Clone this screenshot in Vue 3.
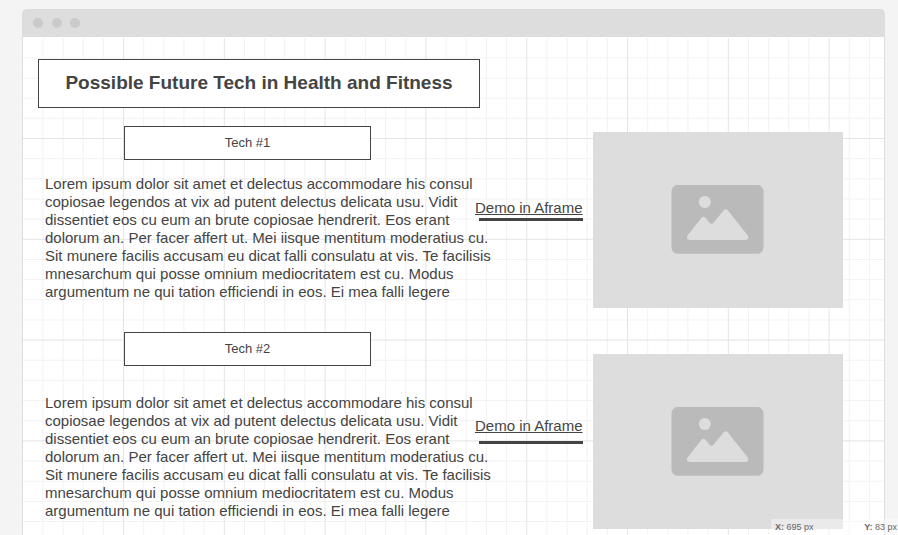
<script setup>
const cell = 20.16
const lines = Array.from({ length: 120 }, (_, i) => i + 1)
const minor = lines.filter((i) => i % 5)
const major = lines.filter((i) => i % 5 === 0)
const grid = (list) =>
  list.map((i) => `M${(i * cell - 0.3).toFixed(2)} 1V3000M0 ${(i * cell + 0.7).toFixed(2)}H3000`).join('')

const copy = `Lorem ipsum dolor sit amet et delectus accommodare his consul
copiosae legendos at vix ad putent delectus delicata usu. Vidit
dissentiet eos cu eum an brute copiosae hendrerit. Eos erant
dolorum an. Per facer affert ut. Mei iisque mentitum moderatius cu.
Sit munere facilis accusam eu dicat falli consulatu at vis. Te facilisis
mnesarchum qui posse omnium mediocritatem est cu. Modus
argumentum ne qui tation efficiendi in eos. Ei mea falli legere`

const items = [
  { id: 'first', name: 'Tech #1', text: copy },
  { id: 'second', name: 'Tech #2', text: copy },
]
</script>

<template>
  <div class="page">
    <main class="window">
      <header class="bar">
        <svg width="60" height="12" viewBox="0 0 60 12" aria-hidden="true">
          <circle cx="6" cy="6" r="5" />
          <circle cx="25" cy="6" r="5" />
          <circle cx="43" cy="6" r="5" />
        </svg>
      </header>
      <div class="canvas">
        <svg class="grid" aria-hidden="true">
          <path class="minor" :d="grid(minor)" />
          <path class="major" :d="grid(major)" />
        </svg>
        <h1 class="title">Possible Future Tech in Health and Fitness</h1>
        <section v-for="item in items" :key="item.id" class="tech" :class="item.id">
          <div class="info">
            <h2 class="name">{{ item.name }}</h2>
            <p class="copy">{{ item.text }}</p>
          </div>
          <div class="demo">
            <a href="#">Demo in Aframe</a>
            <div class="rule"></div>
          </div>
          <div class="picture">
            <svg width="94" height="70" viewBox="-0.500 0.200 94 70" aria-hidden="true">
              <rect width="92" height="69" rx="6.5" fill="#bababa" />
              <circle cx="33.3" cy="17.3" r="6" fill="#ddd" />
              <path
                d="M18.500 55.200H74Q78.500 54.500 76 50.500L56.300 25.500Q54.300 23.200 52.300 25.500L42 38Q40 40 38 38L34 33Q32 31 30 33L16.200 50.500Q13.800 54.500 18.500 55.200Z"
                fill="#ddd"
              />
            </svg>
          </div>
        </section>
      </div>
    </main>
    <div class="status">
      <span><b>X:</b> 695 px</span>
      <span><b>Y:</b> 83 px</span>
    </div>
  </div>
</template>

<style>
body {
  background: #f4f4f4;
}
</style>

<style scoped>
.page {
  position: relative;
  box-sizing: border-box;
  display: flex;
  height: 100vh;
  padding: 9px 13px 0 22px;
  overflow: hidden;
  color: #444;
  font-family: "Liberation Sans", Arial, sans-serif;
}
.window {
  display: flex;
  flex: 1;
  flex-direction: column;
  min-width: 0;
  border: 1px solid #ddd;
  border-bottom: 0;
  border-radius: 5px 5px 0 0;
  background: #fff;
}
.bar {
  box-sizing: border-box;
  height: 27px;
  padding: 7px 0 0 9px;
  background: #ddd;
}
.bar svg {
  display: block;
  fill: #cacaca;
}
.canvas {
  position: relative;
  flex: 1;
  padding: 22px 15px 0;
}
.grid {
  position: absolute;
  inset: 0;
  width: 100%;
  height: 100%;
}
.minor {
  stroke: #f2f2f2;
}
.major {
  stroke: #e4e4e4;
}
.title,
.name {
  position: relative;
  box-sizing: border-box;
  margin: 0;
  border: 1px solid #444;
  background: #fff;
  text-align: center;
}
.title {
  width: 442px;
  padding-bottom: 2px;
  font-size: 19px;
  line-height: 45px;
}
.tech {
  position: relative;
  display: grid;
  grid-template-columns: 430px 118px 250px;
  align-items: start;
  margin: 18px 0 0 7px;
}
.second {
  margin-top: 24px;
}
.name {
  width: 247px;
  margin-left: 79px;
  font-size: 13px;
  font-weight: 400;
  line-height: 32px;
}
.copy {
  margin: 15px 0 0;
  font-size: 15px;
  line-height: 18px;
  white-space: pre;
}
.second .copy {
  margin-top: 28px;
}
.demo {
  padding-top: 73px;
  font-size: 15px;
  line-height: 18px;
}
.second .demo {
  padding-top: 85px;
}
.demo a {
  display: block;
  color: inherit;
  white-space: nowrap;
}
.rule {
  width: 104px;
  height: 3px;
  margin: 1px 0 0 4px;
  background: #444;
}
.second .rule {
  margin-top: 6px;
}
.picture {
  display: flex;
  align-items: center;
  justify-content: center;
  height: 176px;
  margin-top: 6px;
  background: #ddd;
}
.second .picture {
  height: 175px;
  margin-top: 22px;
}
.status {
  position: absolute;
  right: 0;
  bottom: 0;
  display: flex;
  justify-content: space-between;
  box-sizing: border-box;
  width: 127px;
  height: 16px;
  padding: 0 1px 0 4px;
  background: rgba(255, 255, 255, 0.4);
  color: #666;
  font-size: 9px;
  line-height: 16px;
}
</style>
